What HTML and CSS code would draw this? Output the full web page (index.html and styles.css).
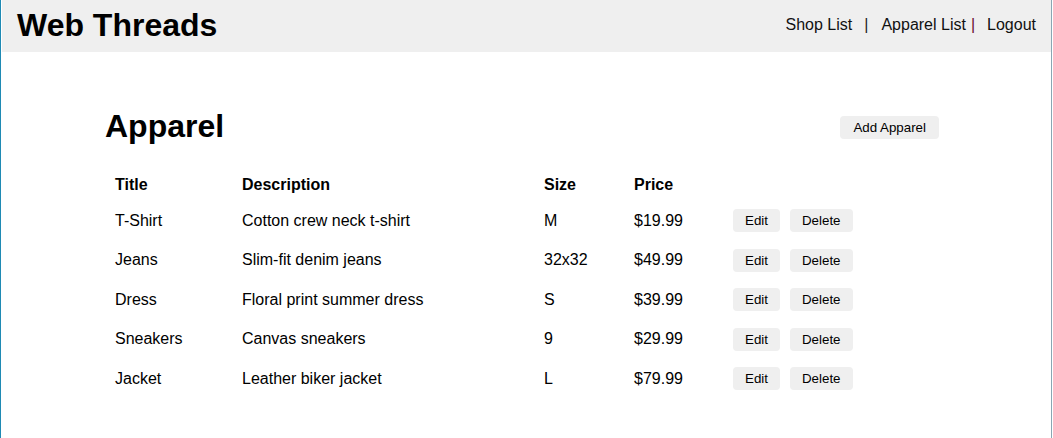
FILE: index.html
```html
<!DOCTYPE html>
<html>
<head>
<meta charset="utf-8">
<title>Web Threads</title>
<link rel="stylesheet" href="styles.css">
</head>
<body>
<div class="frame">
  <header class="topbar">
    <h1 class="brand">Web Threads</h1>
    <nav class="nav">
      <a class="nav-link" href="#">Shop List</a><span class="sep sep-a">|</span><a class="nav-link" href="#">Apparel List</a><span class="sep sep-b">|</span><a class="nav-link last" href="#">Logout</a>
    </nav>
  </header>
  <main class="content">
    <div class="page-head">
      <h2 class="page-title">Apparel</h2>
      <button class="btn">Add Apparel</button>
    </div>
    <table class="list">
      <thead>
        <tr><th class="c-title">Title</th><th class="c-desc">Description</th><th class="c-size">Size</th><th class="c-price">Price</th><th class="c-act"></th></tr>
      </thead>
      <tbody>
        <tr><td>T-Shirt</td><td>Cotton crew neck t-shirt</td><td>M</td><td>$19.99</td><td><div class="actions"><button class="btn">Edit</button><button class="btn">Delete</button></div></td></tr>
        <tr><td>Jeans</td><td>Slim-fit denim jeans</td><td>32x32</td><td>$49.99</td><td><div class="actions"><button class="btn">Edit</button><button class="btn">Delete</button></div></td></tr>
        <tr><td>Dress</td><td>Floral print summer dress</td><td>S</td><td>$39.99</td><td><div class="actions"><button class="btn">Edit</button><button class="btn">Delete</button></div></td></tr>
        <tr><td>Sneakers</td><td>Canvas sneakers</td><td>9</td><td>$29.99</td><td><div class="actions"><button class="btn">Edit</button><button class="btn">Delete</button></div></td></tr>
        <tr><td>Jacket</td><td>Leather biker jacket</td><td>L</td><td>$79.99</td><td><div class="actions"><button class="btn">Edit</button><button class="btn">Delete</button></div></td></tr>
      </tbody>
    </table>
  </main>
</div>
</body>
</html>
```
FILE: styles.css
```css
html, body {
  margin: 0;
  padding: 0;
  background: #fff;
}
body {
  font-family: "Liberation Sans", Arial, sans-serif;
  color: #000;
}
.frame {
  min-height: 438px;
  box-sizing: border-box;
  border-left: 1px solid #1f8ab4;
  border-right: 1px solid #8aa6b3;
  margin-right: 1px;
  padding-left: 1px;
}
.topbar {
  display: flex;
  align-items: center;
  justify-content: space-between;
  height: 52px;
  background: #efefef;
  padding: 0 15px 0 15px;
}
.brand {
  margin: 0;
  font-size: 32px;
  font-weight: bold;
  line-height: 37px;
  padding-bottom: 1px;
}
.nav {
  display: flex;
  align-items: center;
  font-size: 16px;
  line-height: 18px;
  padding-bottom: 2px;
}
.nav-link {
  color: #111;
  text-decoration: none;
}
.sep {
  color: #222;
}
.sep-a {
  margin: 0 13px 0 12px;
}
.sep-b {
  margin: 0 12px 0 5px;
  color: #6a1030;
}
.content {
  width: 834px;
  margin-left: 103px;
  padding-top: 56px;
}
.page-head {
  display: flex;
  align-items: center;
  justify-content: space-between;
  height: 37px;
}
.page-title {
  margin: 0;
  font-size: 32px;
  font-weight: bold;
  line-height: 37px;
}
.btn {
  font-family: "Liberation Sans", Arial, sans-serif;
  font-size: 13.333px;
  line-height: 15px;
  color: #000;
  background: #efefef;
  border: none;
  border-radius: 4px;
  padding: 4px 12px;
  margin: 0;
}
.page-head .btn {
  padding: 4px 13px;
  margin-top: 1px;
}
.list {
  border-collapse: collapse;
  margin-top: 23px;
  margin-left: 2px;
  font-size: 16px;
}
.list th, .list td {
  text-align: left;
  padding: 8px;
  line-height: 18px;
  vertical-align: middle;
}
.list th {
  font-weight: bold;
  padding-bottom: 7px;
}
.list td {
  height: 23.5px;
}
.c-title { width: 111px; }
.c-desc { width: 286px; }
.c-size { width: 74px; }
.c-price { width: 83px; }
.actions {
  display: flex;
  gap: 10px;
}
```
